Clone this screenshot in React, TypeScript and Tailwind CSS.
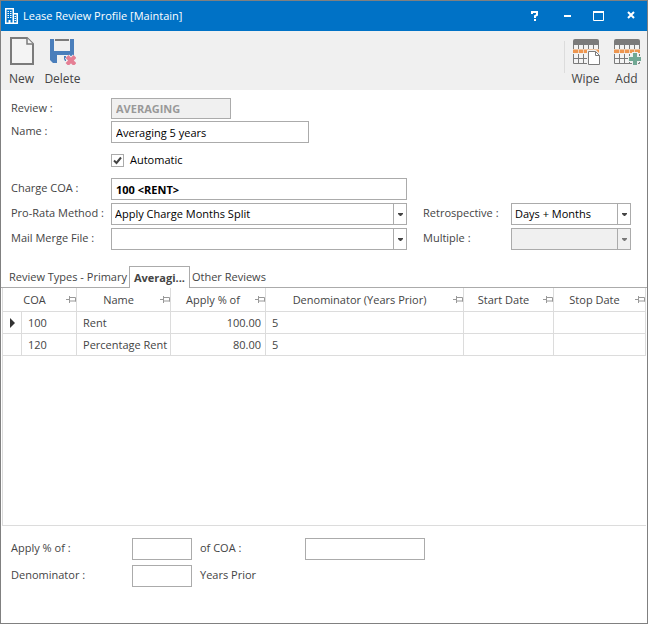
import { useState } from "react";
import type { ReactNode } from "react";

type ReviewRow = {
  coa: string;
  name: string;
  applyPercent: string;
  denominator: string;
  startDate: string;
  stopDate: string;
};

const rows: ReviewRow[] = [
  { coa: "100", name: "Rent", applyPercent: "100.00", denominator: "5", startDate: "", stopDate: "" },
  { coa: "120", name: "Percentage Rent", applyPercent: "80.00", denominator: "5", startDate: "", stopDate: "" },
];

const tabs = [
  { id: "types", label: "Review Types - Primary" },
  { id: "averaging", label: "Averagi..." },
  { id: "other", label: "Other Reviews" },
];

const inputClass = "h-[22px] border border-[#ababab] bg-white px-1 text-black outline-none";

function BuildingIcon() {
  return (
    <svg width="14" height="16" viewBox="0 0 14 16" fill="none" stroke="#fff" aria-hidden="true">
      <path d="M0.750 15.250V0.750H8.250V15.250M8.250 5.750H12.250V15.250M0 15.250H13" strokeWidth="1.500" />
      <path d="M2.500 3.500h1.500M5 3.500h1.500M2.500 5.500h1.500M5 5.500h1.500M2.500 7.500h1.500M5 7.500h1.500M2.500 9.500h1.500M5 9.500h1.500M9.500 8.500h1.500M9.500 10.500h1.500M9.500 12.500h1.500" />
      <path d="M4.500 15V12" strokeWidth="2" />
    </svg>
  );
}

function NewIcon() {
  return (
    <svg width="24" height="28" viewBox="0 0 24 28" fill="#f4f4f4" stroke="#7b7b7b" strokeWidth="2" aria-hidden="true">
      <path d="M1 1H17L23 7V27H1Z" />
      <path d="M17 1V7H23" strokeWidth="1.500" />
    </svg>
  );
}

function DeleteIcon() {
  return (
    <svg width="26" height="28" viewBox="0 0 26 28" fill="none" aria-hidden="true">
      <path d="M0 2H4V14H20V2H24V26H3L0 23Z" fill="#4a7ebb" />
      <path d="M5 3H19" stroke="#7b7b7b" strokeWidth="2" />
      <path d="M7 18H18V26H7Z" fill="#f0f0f0" />
      <path d="M14 19h2v5h-1l-1-2z" fill="#4a7ebb" />
      <path d="M17 19.500L25 27.500M25 19.500L17 27.500" stroke="#f0f0f0" strokeWidth="6" />
      <path d="M17 19.500L25 27.500M25 19.500L17 27.500" stroke="#e57f94" strokeWidth="4" />
    </svg>
  );
}

function TableGlyph() {
  return (
    <>
      <path d="M0 4Q0 2 2 2H24Q26 2 26 4V8H0Z" fill="#7b7b7b" />
      <path d="M0.500 8V26.500H25.500V8" fill="#f4f4f4" stroke="#7b7b7b" />
      <path d="M1 21.500H25M5.500 8V26M10.500 8V26M15.500 8V26M20.500 8V26" stroke="#7b7b7b" />
      <path d="M0 12H26V17H0Z" fill="#f0f0f0" />
      <path d="M0 12.500H26V16H0Z" fill="#ed9650" />
      <path d="M5.500 12V16M10.500 12V16M15.500 12V16M20.500 12V16" stroke="#f6d3b6" />
    </>
  );
}

function WipeIcon() {
  return (
    <svg width="28" height="28" viewBox="-1 0 28 28" fill="none" aria-hidden="true">
      <TableGlyph />
      <path d="M14 13H23L27 17V28H14Z" fill="#f0f0f0" />
      <path d="M15.500 14.500H22.500L26.500 18.500V27.500H15.500Z" fill="#fff" stroke="#7b7b7b" />
      <path d="M22.500 14.500V18.500H26.500" stroke="#7b7b7b" />
    </svg>
  );
}

function AddIcon() {
  return (
    <svg width="28" height="28" viewBox="-1 0 28 28" fill="none" aria-hidden="true">
      <TableGlyph />
      <path d="M21 15V28M14 22H27" stroke="#f0f0f0" strokeWidth="6" />
      <path d="M21 16V28M15 22H27" stroke="#72a894" strokeWidth="4" />
    </svg>
  );
}

function PinIcon() {
  return (
    <svg width="10" height="7" viewBox="0 0 10 7" fill="none" stroke="#999" className="shrink-0" aria-hidden="true">
      <path d="M0 3.500H3M3.500 0V7M4 1.500H9.500V5.500M4 5H10" />
    </svg>
  );
}

function ToolButton({ label, icon }: { label: string; icon: ReactNode }) {
  return (
    <button type="button" className="flex w-[41px] flex-col items-center gap-1 text-[12px] leading-5">
      {icon}
      {label}
    </button>
  );
}

function WindowButton({ label, children }: { label: string; children: ReactNode }) {
  return (
    <button type="button" aria-label={label} className="flex h-7 w-8 items-center justify-center">
      <svg width="12" height="12" viewBox="0 0 12 12" fill="none" stroke="#fff" aria-hidden="true">
        {children}
      </svg>
    </button>
  );
}

type DropDownProps = { id: string; value: string; disabled?: boolean };

function DropDown({ id, value, disabled }: DropDownProps) {
  return (
    <div className="relative">
      <select
        id={id}
        defaultValue={value}
        disabled={disabled}
        className="block h-[22px] w-full appearance-none border border-[#ababab] bg-white pr-4 pl-[3px] text-black outline-none disabled:bg-[#f0f0f0] disabled:opacity-100"
      >
        <option value={value}>{value}</option>
      </select>
      <span className="pointer-events-none absolute inset-y-0 right-0 flex w-[14px] items-center justify-center border-l border-[#ababab]">
        <svg width="5" height="3" viewBox="0 0 5 3" fill={disabled ? "#777" : "#444"} aria-hidden="true">
          <path d="M0 0H5V1L3 3H2L0 1Z" />
        </svg>
      </span>
    </div>
  );
}

function HeaderCell({ label, span }: { label: string; span?: number }) {
  return (
    <th colSpan={span} scope="col" className="h-6 border-r border-b border-[#dcdcdc] p-0 font-normal">
      <div className="flex items-center">
        <span className="flex-1 text-center whitespace-nowrap">{label}</span>
        <PinIcon />
      </div>
    </th>
  );
}

export default function App() {
  const [activeTab, setActiveTab] = useState("averaging");
  const [selectedCoa, setSelectedCoa] = useState("100");

  return (
    <main className="flex min-h-screen flex-col border border-[#808080] bg-white font-['Open_Sans',sans-serif] text-[11px] leading-5 text-[#444]">
      <header className="flex h-[30px] items-center bg-[#0072c6] pl-1 text-white">
        <BuildingIcon />
        <h1 className="ml-1 flex-1">Lease Review Profile [Maintain]</h1>
        <WindowButton label="Help">
          <path d="M3 4V2H8V5L6 6V8M6 9V11" strokeWidth="2" />
        </WindowButton>
        <WindowButton label="Minimize">
          <path d="M3 6H10" strokeWidth="2" />
        </WindowButton>
        <WindowButton label="Maximize">
          <path d="M0.500 2V10.500H10.500V2" />
          <path d="M0 2H11" strokeWidth="2" />
        </WindowButton>
        <WindowButton label="Close">
          <path d="M3 2L9 8M9 2L3 8" strokeWidth="2" />
        </WindowButton>
      </header>

      <div className="flex bg-[#f0f0f0] pt-[6px] pb-px">
        <ToolButton label="New" icon={<NewIcon />} />
        <ToolButton label="Delete" icon={<DeleteIcon />} />
        <div className="mt-1 mb-4 ml-auto border-l border-[#dcdcdc]" />
        <ToolButton label="Wipe" icon={<WipeIcon />} />
        <ToolButton label="Add" icon={<AddIcon />} />
      </div>

      <form className="px-[10px] pt-2">
        <div className="grid grid-cols-[100px_1fr] gap-y-[2px]">
          <label htmlFor="review">Review :</label>
          <input
            id="review"
            disabled
            defaultValue="AVERAGING"
            className="h-[21px] w-[120px] border border-[#ababab] bg-[#f0f0f0] px-1 font-bold text-[#999]"
          />
          <label htmlFor="name">Name :</label>
          <input id="name" defaultValue="Averaging 5 years" className={`${inputClass} w-[198px]`} />
        </div>
        <label className="mt-[7px] mb-2 ml-[100px] flex w-fit items-center gap-[6px] text-black">
          <input
            type="checkbox"
            defaultChecked
            className="peer size-[13px] appearance-none border border-[#ababab] bg-white"
          />
          <svg
            width="13"
            height="13"
            viewBox="0 0 13 13"
            fill="none"
            className="pointer-events-none invisible -ml-[19px] peer-checked:visible"
            aria-hidden="true"
          >
            <path d="M3 6.500L5.500 9L10 3.500" stroke="#444" strokeWidth="2" />
          </svg>
          Automatic
        </label>
        <div className="grid grid-cols-[100px_1fr_88px_120px] gap-y-[3px] pr-[6px]">
          <label htmlFor="charge-coa">Charge COA :</label>
          <input id="charge-coa" defaultValue="100 <RENT>" className={`${inputClass} mr-4 min-w-0 font-bold`} />
          <label htmlFor="pro-rata" className="col-start-1">
            Pro-Rata Method :
          </label>
          <div className="mr-4">
            <DropDown id="pro-rata" value="Apply Charge Months Split" />
          </div>
          <label htmlFor="retrospective">Retrospective :</label>
          <DropDown id="retrospective" value="Days + Months" />
          <label htmlFor="mail-merge">Mail Merge File :</label>
          <div className="mr-4">
            <DropDown id="mail-merge" value="" />
          </div>
          <label htmlFor="multiple">Multiple :</label>
          <DropDown id="multiple" value="" disabled />
        </div>
      </form>

      <div role="tablist" className="mt-4 flex border-b border-[#ababab] pl-[6px]">
        {tabs.map((tab) => (
          <button
            key={tab.id}
            type="button"
            role="tab"
            aria-selected={tab.id === activeTab}
            onClick={() => setActiveTab(tab.id)}
            className={
              tab.id === activeTab
                ? "-mb-px border border-b-0 border-[#ababab] bg-white px-1 font-bold"
                : "border-t border-transparent px-[2px]"
            }
          >
            {tab.label}
          </button>
        ))}
      </div>

      <section className="mx-px flex-1 border-b border-l border-[#dcdcdc]">
        <table className="w-full table-fixed border-separate border-spacing-0">
          <colgroup>
            <col className="w-[19px]" />
            <col className="w-[55px]" />
            <col className="w-[94px]" />
            <col className="w-[95px]" />
            <col />
            <col className="w-[90px]" />
            <col className="w-[92px]" />
          </colgroup>
          <thead>
            <tr>
              <HeaderCell label="COA" span={2} />
              <HeaderCell label="Name" />
              <HeaderCell label="Apply % of" />
              <HeaderCell label="Denominator (Years Prior)" />
              <HeaderCell label="Start Date" />
              <HeaderCell label="Stop Date" />
            </tr>
          </thead>
          <tbody>
            {rows.map((row) => (
              <tr
                key={row.coa}
                onClick={() => setSelectedCoa(row.coa)}
                className="h-[22px] *:border-r *:border-b *:border-[#dcdcdc] *:py-0 *:whitespace-nowrap"
              >
                <td className="pl-[7px]">
                  {row.coa === selectedCoa && (
                    <svg width="5" height="10" viewBox="0 0 5 10" fill="#333" aria-hidden="true">
                      <path d="M0 0L5 5L0 10Z" />
                    </svg>
                  )}
                </td>
                <td className="pl-[6px]">{row.coa}</td>
                <td className="pl-[6px]">{row.name}</td>
                <td className="pr-1 text-right">{row.applyPercent}</td>
                <td className="pl-[6px]">{row.denominator}</td>
                <td>{row.startDate}</td>
                <td>{row.stopDate}</td>
              </tr>
            ))}
          </tbody>
        </table>
      </section>

      <form className="grid grid-cols-[121px_60px_113px_120px] gap-y-[5px] px-[10px] pt-3 pb-9">
        <label htmlFor="apply-percent">Apply % of :</label>
        <input id="apply-percent" className={`${inputClass} min-w-0`} />
        <label htmlFor="of-coa" className="pl-2">
          of COA :
        </label>
        <input id="of-coa" className={`${inputClass} min-w-0`} />
        <label htmlFor="denominator">Denominator :</label>
        <input id="denominator" className={`${inputClass} min-w-0`} />
        <span className="pl-2">Years Prior</span>
      </form>
    </main>
  );
}
